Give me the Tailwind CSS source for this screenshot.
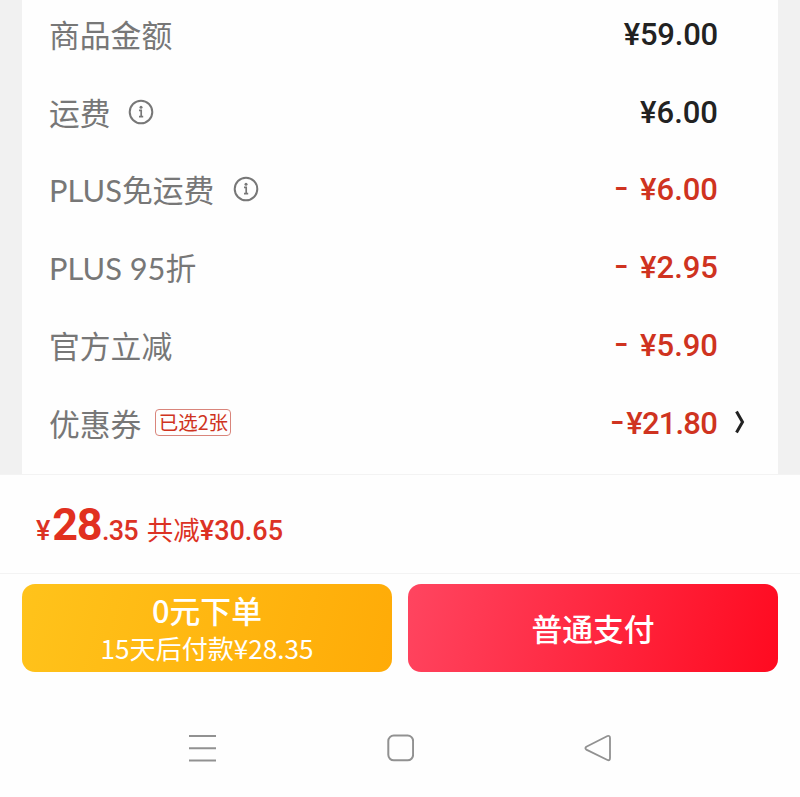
<!DOCTYPE html>
<html lang="zh-CN">
<head>
<meta charset="utf-8">
<title>订单结算</title>
<script src="https://cdn.jsdelivr.net/npm/@tailwindcss/browser@4"></script>
</head>
<body class="bg-white">
<div class="w-[800px] h-[797px] overflow-hidden flex flex-col bg-[#fefefe] font-['Noto_Sans_CJK_SC',sans-serif]">
  <main class="h-[474px] shrink-0 bg-[#f1f1f1] px-[22px] flex flex-col">
    <section class="h-[474px] bg-[#fefefe] pl-[27px] pr-[60px] flex flex-col text-[30.8px] leading-[44px] text-[#777] whitespace-nowrap">
      <div class="h-[74px] pb-[5px] shrink-0 flex items-center justify-between">
        <span class="pb-[2px]">商品金额</span>
        <span class="font-[Roboto,sans-serif] font-medium text-[31px] tracking-[-0.2px] text-[#222]">¥59.00</span>
      </div>
      <div class="h-[77.6px] shrink-0 flex items-center justify-between">
        <span class="flex items-center gap-[17px]"><span class="pb-[1px]">运费</span>
          <svg class="size-[26px] -mt-[2px]" viewBox="0 0 26 26" fill="none" stroke="#777" stroke-width="2"><circle cx="13" cy="13" r="11.3"/><path d="M11 11.4h2.2v6M11 17.6h4.2" stroke-width="1.7"/><circle cx="13" cy="8.2" r="1.5" fill="#777" stroke="none"/></svg>
        </span>
        <span class="font-[Roboto,sans-serif] font-medium text-[31px] text-[#222]">¥6.00</span>
      </div>
      <div class="h-[77.6px] shrink-0 flex items-center justify-between">
        <span class="flex items-center gap-[19px]"><span><span class="font-[Lato,sans-serif]">PLUS</span>免运费</span>
          <svg class="size-[26px] -mt-[2px]" viewBox="0 0 26 26" fill="none" stroke="#777" stroke-width="2"><circle cx="13" cy="13" r="11.3"/><path d="M11 11.4h2.2v6M11 17.6h4.2" stroke-width="1.7"/><circle cx="13" cy="8.2" r="1.5" fill="#777" stroke="none"/></svg>
        </span>
        <span class="flex gap-[14px] font-[Roboto,sans-serif] font-medium text-[31px] text-[#cf3320]"><span class="inline-block -mt-[2px] scale-x-130">-</span><span>¥6.00</span></span>
      </div>
      <div class="h-[77.6px] shrink-0 flex items-center justify-between">
        <span><span class="font-[Lato,sans-serif]">PLUS 95</span>折</span>
        <span class="flex gap-[14px] font-[Roboto,sans-serif] font-medium text-[31px] text-[#cf3320]"><span class="inline-block -mt-[2px] scale-x-130">-</span><span>¥2.95</span></span>
      </div>
      <div class="h-[77.6px] shrink-0 flex items-center justify-between">
        <span class="pb-[2px]">官方立减</span>
        <span class="flex gap-[14px] font-[Roboto,sans-serif] font-medium text-[31px] text-[#cf3320]"><span class="inline-block -mt-[2px] scale-x-130">-</span><span>¥5.90</span></span>
      </div>
      <div class="h-[77.6px] shrink-0 flex items-center justify-between">
        <span class="flex items-center gap-[14px]"><span class="pb-[1px]">优惠券</span>
          <span class="h-[27px] w-[76px] -mt-[2px] rounded-[4px] border border-[#d9857b] text-[#cf3320] text-[19.5px] leading-[24px] flex justify-center">已选2张</span>
        </span>
        <span class="flex items-center -mr-[28px] gap-[17px]"><span class="flex gap-[4px] pt-[1px] font-[Roboto,sans-serif] font-medium text-[31px] text-[#cf3320]"><span class="inline-block -mt-[2px] scale-x-130">-</span><span class="tracking-[-0.8px]">¥21.80</span></span>
          <svg class="w-[12px] h-[24px] -mt-[2px]" viewBox="0 0 12 24" fill="none" stroke="#222" stroke-width="3"><path d="M2.5 1.5L8.5 12L2.5 22.5"/></svg>
        </span>
      </div>
    </section>
  </main>
  <section class="h-[100px] shrink-0 border-y border-[#f3f3f3] pl-[36px] pt-[2px] flex items-center text-[#dc3224] whitespace-nowrap">
    <div class="flex items-baseline font-[Roboto,sans-serif] font-medium">
      <span class="text-[27px]">¥</span><span class="ml-[2px] text-[45px] leading-[60px] font-bold tracking-[-1.5px] text-[#e1301f]">28</span><span class="ml-[1px] text-[27px] tracking-[-0.8px]">.35</span>
      <span class="ml-[9px] text-[26.5px] font-normal font-['Noto_Sans_CJK_SC',sans-serif]">共减</span><span class="text-[27px]">¥30.65</span>
    </div>
  </section>
  <div class="h-[99px] shrink-0 px-[22px] pt-[10px] flex gap-[16px] text-white whitespace-nowrap">
    <button class="w-[370px] h-[88px] rounded-[13px] bg-linear-[105deg,#ffc31b,#ffab07] flex flex-col items-center">
      <span class="mt-[7px] text-[30.8px] leading-[38px] font-medium">0元下单</span>
      <span class="text-[26.1px] leading-[38px]">15天后付款¥28.35</span>
    </button>
    <button class="w-[370px] h-[88px] rounded-[13px] bg-linear-[105deg,#ff4560,#ff0a20] flex items-center justify-center text-[30.8px] font-medium">普通支付</button>
  </div>
  <nav class="h-[124px] shrink-0 flex justify-between px-[188px] pt-[61px]">
    <svg class="w-[28px] h-[28px]" viewBox="0 0 28 28" fill="none" stroke="#919191" stroke-width="2"><path d="M1 2h27M1 14.2h27M1 26.5h27"/></svg>
    <svg class="w-[28px] h-[28px]" viewBox="0 0 28 28" fill="none" stroke="#919191" stroke-width="2"><rect x="2.3" y="1.5" width="24.8" height="24.8" rx="5.5"/></svg>
    <svg class="w-[28px] h-[28px]" viewBox="0 0 28 28" fill="none" stroke="#919191" stroke-width="1.8" stroke-linejoin="round"><path d="M2.3 12.7L23.5 2Q26 1.2 26 4V24Q26 27 23.5 26L2.3 15.6Q0.5 14.1 2.3 12.7Z"/></svg>
  </nav>
</div>
</body>
</html>
